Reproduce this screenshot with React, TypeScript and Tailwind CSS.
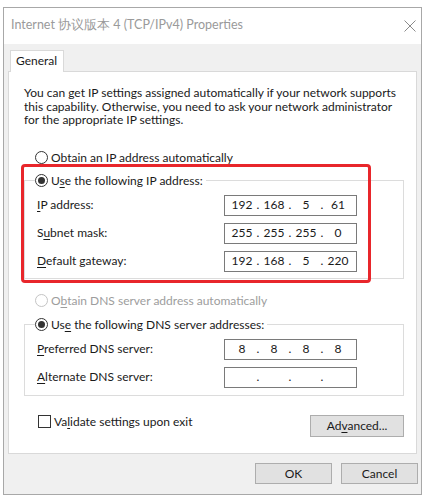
import type { ReactNode } from 'react'

function Radio({ checked, disabled }: { checked?: boolean; disabled?: boolean }) {
    return (
        <span
            className={
                'flex h-[13px] w-[13px] shrink-0 items-center justify-center rounded-full border bg-white ' +
                (disabled ? 'border-[#c4c4c4]' : 'border-[#333333]')
            }
        >
            {checked && <span className="h-[7px] w-[7px] rounded-full bg-[#333333]" />}
        </span>
    )
}

function IpBox({ parts }: { parts: string[] }) {
    return (
        <div className="flex h-[21px] w-[133px] items-center border border-[#7a7a7a] bg-white pl-[5px]">
            {parts.map((p, i) => (
                <div key={i} className="flex">
                    {i > 0 && <span className="w-[8px] text-center">.</span>}
                    <span className="w-[24px] text-center">{p}</span>
                </div>
            ))}
        </div>
    )
}

function Row({ label, parts }: { label: ReactNode; parts: string[] }) {
    return (
        <div className="grid grid-cols-[187px_133px] items-center pl-[2px]">
            <span>{label}</span>
            <IpBox parts={parts} />
        </div>
    )
}

const u = (c: string) => <u className="underline-offset-[2px]">{c}</u>

export default function App() {
    return (
        <div className="relative h-[499px] w-[426px] bg-white pl-[3px] pt-[7px] font-['Segoe_UI','Lato',sans-serif] text-[12px] leading-[14px] text-[#1a1a1a]">
            <div className="flex h-[488px] w-[419px] flex-col border border-[#a8a8a8] bg-[#f0f0f0]">
                {/* title bar */}
                <div className="flex h-[36px] items-center justify-between bg-white pb-[2px] pl-[7px] pr-[5px]">
                    <span className="text-[12.5px] text-[#9a9a9a]">Internet 协议版本 4 (TCP/IPv4) Properties</span>
                    <svg width="12" height="12" viewBox="0 0 12 12" className="mt-[2px]">
                        <path d="M0.5 0.5 L11.5 11.5 M11.5 0.5 L0.5 11.5" stroke="#8a8a8a" strokeWidth="1" />
                    </svg>
                </div>

                <div className="pt-[6px]">
                    <div className="relative z-10 ml-[6px] -mb-[1px] h-[22px] w-[54px] border border-b-0 border-[#d9d9d9] bg-white pl-[5px] pt-[3px]">
                        General
                    </div>
                    <div className="mx-[4px] flex h-[383px] flex-col border border-[#d9d9d9] bg-white pl-[15px]">
                        <p className="pt-[14px] leading-[13.5px] whitespace-nowrap">
                            You can get IP settings assigned automatically if your network supports
                            <br />
                            this capability. Otherwise, you need to ask your network administrator
                            <br />
                            for the appropriate IP settings.
                        </p>

                        <div className="ml-[11px] mt-[24px] flex items-center gap-[3px]">
                            <Radio />
                            <span>{u('O')}btain an IP address automatically</span>
                        </div>

                        <fieldset className="mt-[9px] w-[380px] border border-[#dcdcdc] px-[10px] pb-[6px]">
                            <legend className="flex items-center gap-[3px] pr-[3px]">
                                <Radio checked />
                                <span>U{u('s')}e the following IP address:</span>
                            </legend>
                            <div className="mt-[7px] flex flex-col gap-[7px]">
                                <Row label={<>{u('I')}P address:</>} parts={['192', '168', '5', '61']} />
                                <Row label={<>S{u('u')}bnet mask:</>} parts={['255', '255', '255', '0']} />
                                <Row label={<>{u('D')}efault gateway:</>} parts={['192', '168', '5', '220']} />
                            </div>
                        </fieldset>

                        <div className="ml-[11px] mt-[15px] flex items-center gap-[3px] text-[#9d9d9d]">
                            <Radio disabled />
                            <span>O{u('b')}tain DNS server address automatically</span>
                        </div>

                        <fieldset className="mt-[10px] w-[380px] border border-[#dcdcdc] px-[10px] pb-[7px]">
                            <legend className="flex items-center gap-[3px] pr-[3px]">
                                <Radio checked />
                                <span>Us{u('e')} the following DNS server addresses:</span>
                            </legend>
                            <div className="mt-[7px] flex flex-col gap-[7px]">
                                <Row label={<>{u('P')}referred DNS server:</>} parts={['8', '8', '8', '8']} />
                                <Row label={<>{u('A')}lternate DNS server:</>} parts={['', '', '', '']} />
                            </div>
                        </fieldset>

                        <div className="mt-[19px] flex w-[380px] items-start justify-between">
                            <div className="ml-[14px] flex items-center gap-[3px]">
                                <span className="h-[13px] w-[13px] border border-[#333333] bg-white" />
                                <span>Va{u('l')}idate settings upon exit</span>
                            </div>
                            <button className="h-[22px] w-[94px] border border-[#adadad] bg-[#e1e1e1]">
                                Ad{u('v')}anced...
                            </button>
                        </div>
                    </div>

                    <div className="mt-[9px] flex justify-end gap-[9px] pr-[3px]">
                        <button className="h-[21px] w-[77px] border border-[#adadad] bg-[#e1e1e1]">OK</button>
                        <button className="h-[21px] w-[77px] border border-[#adadad] bg-[#e1e1e1]">Cancel</button>
                    </div>
                </div>
            </div>

            {/* red annotation box */}
            <div className="absolute left-[21px] top-[164px] h-[119px] w-[350px] rounded-[4px] border-[3px] border-[#e8262b]" />
        </div>
    )
}
